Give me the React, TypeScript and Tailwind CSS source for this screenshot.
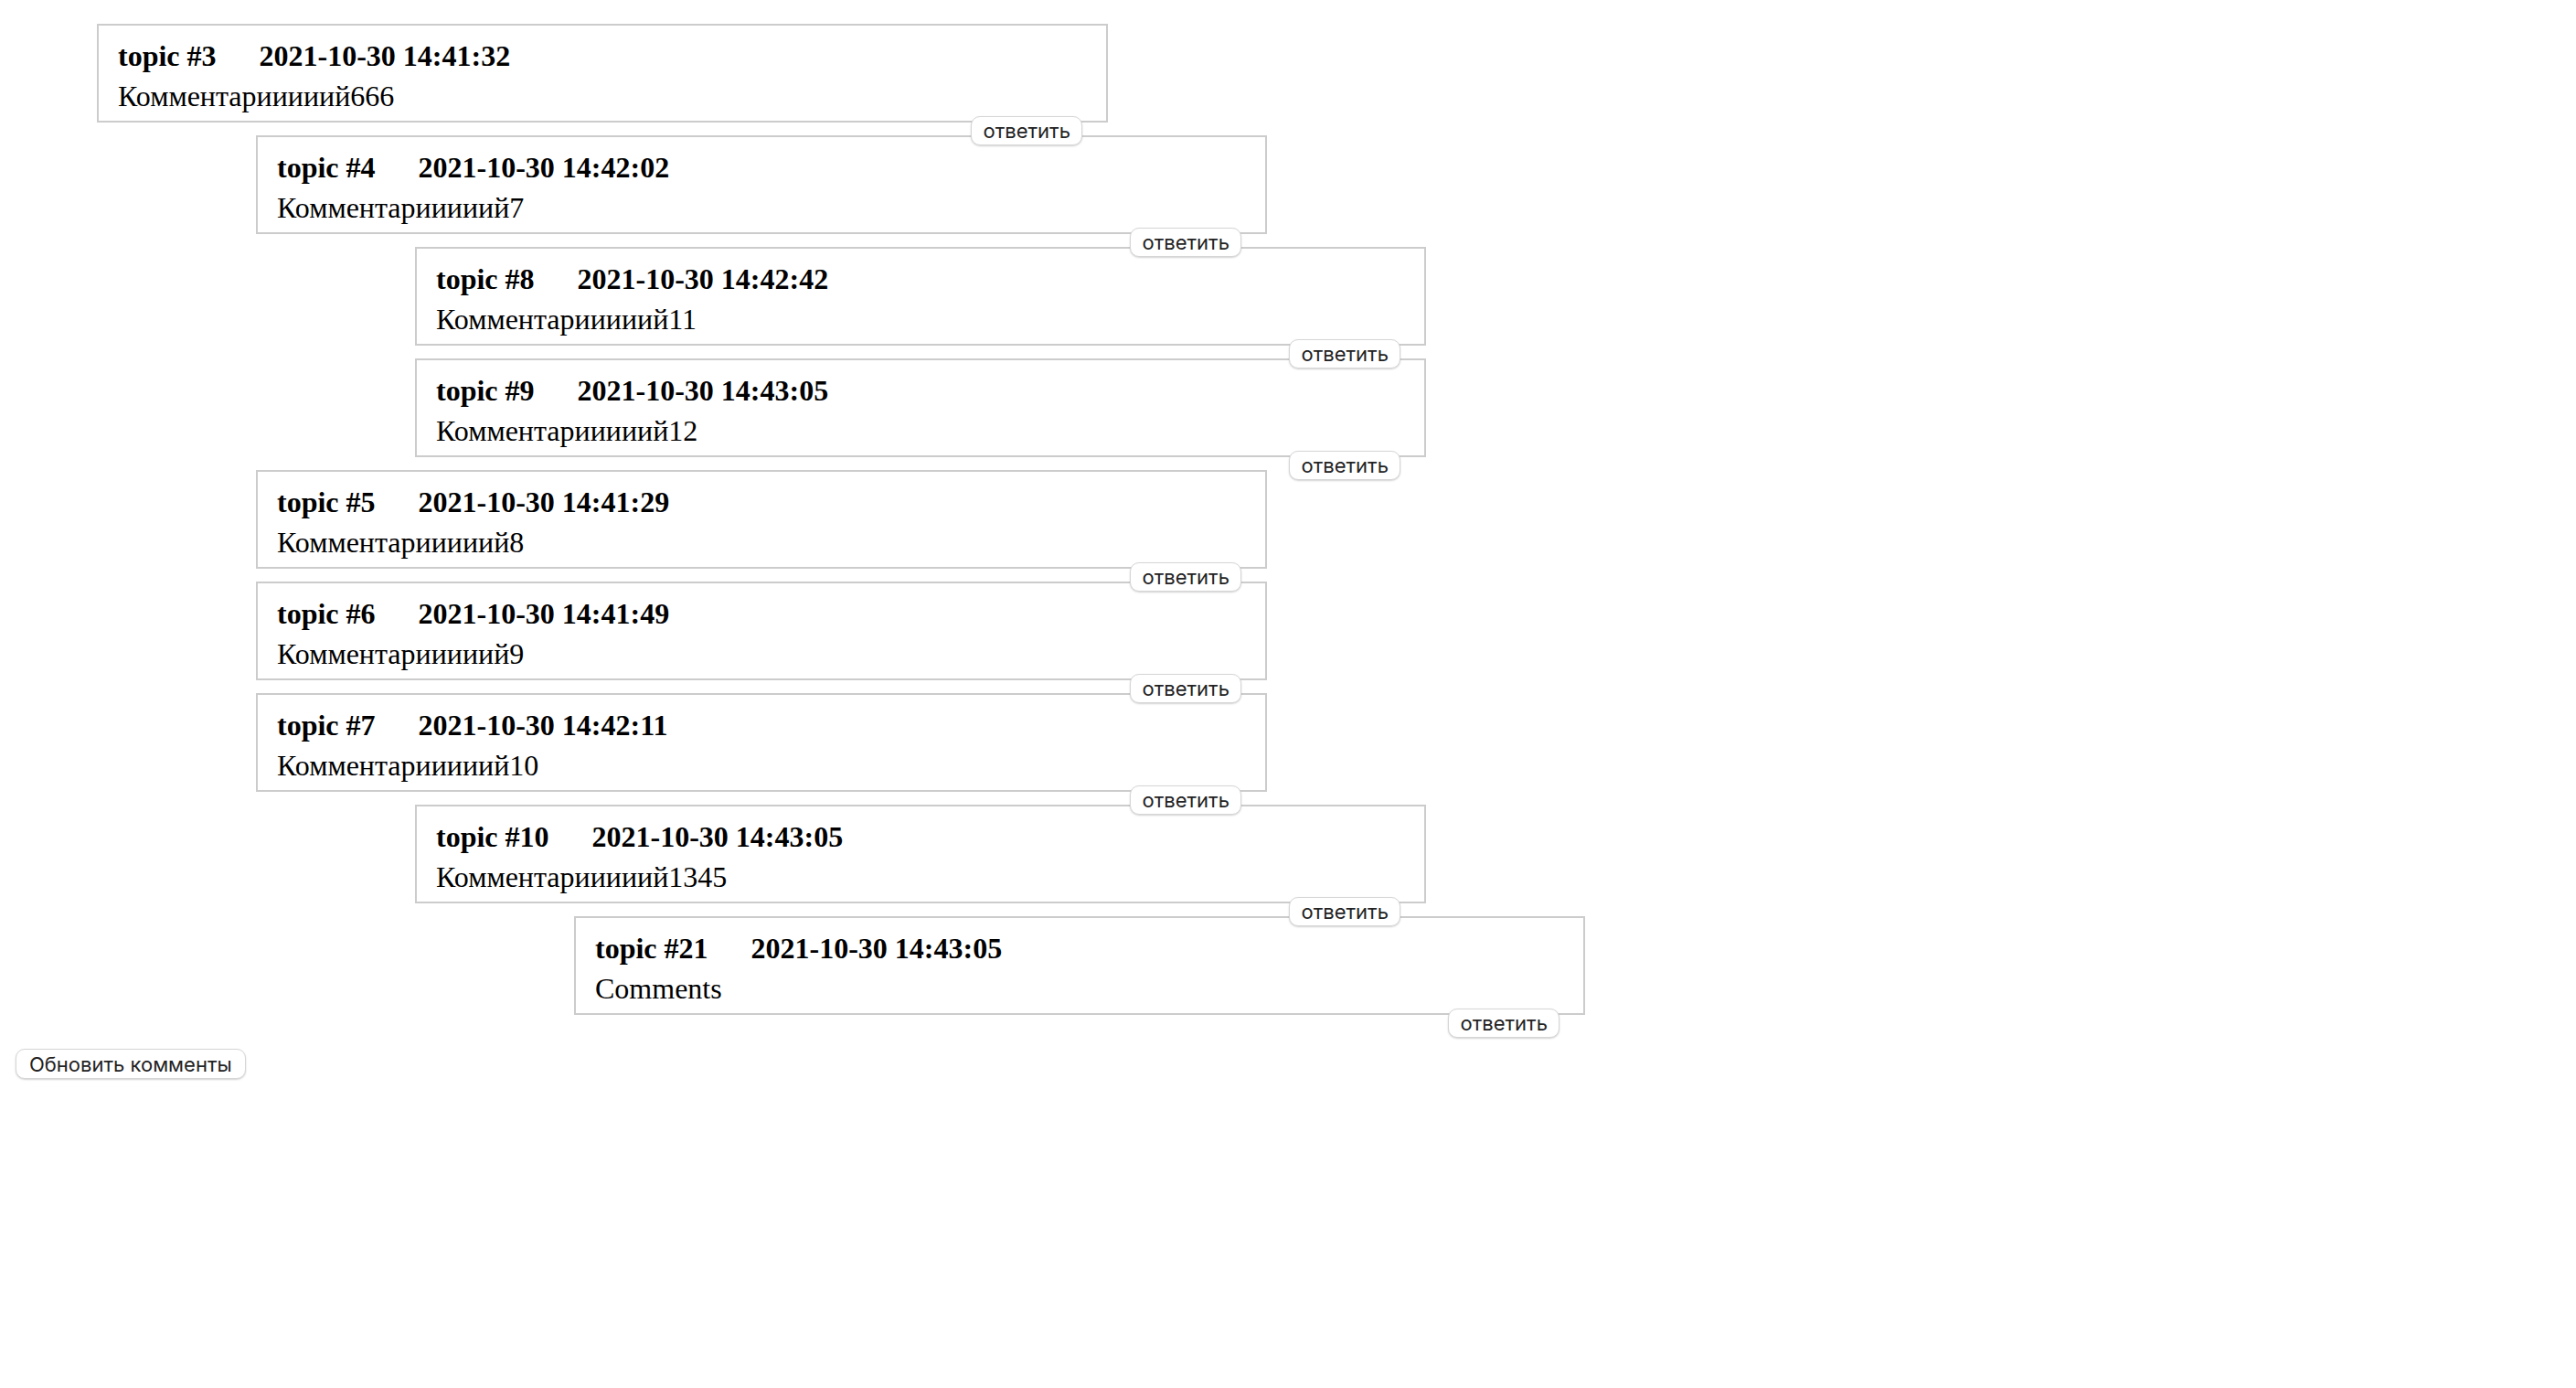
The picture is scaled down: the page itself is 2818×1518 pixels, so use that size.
import { useState } from "react";

type Topic = {
  id: number;
  date: string;
  text: string;
  children?: Topic[];
};

const topics: Topic[] = [
  {
    id: 3,
    date: "2021-10-30 14:41:32",
    text: "Комментарииииий666",
    children: [
      {
        id: 4,
        date: "2021-10-30 14:42:02",
        text: "Комментарииииий7",
        children: [
          { id: 8, date: "2021-10-30 14:42:42", text: "Комментарииииий11" },
          { id: 9, date: "2021-10-30 14:43:05", text: "Комментарииииий12" },
        ],
      },
      { id: 5, date: "2021-10-30 14:41:29", text: "Комментарииииий8" },
      { id: 6, date: "2021-10-30 14:41:49", text: "Комментарииииий9" },
      {
        id: 7,
        date: "2021-10-30 14:42:11",
        text: "Комментарииииий10",
        children: [
          {
            id: 10,
            date: "2021-10-30 14:43:05",
            text: "Комментарииииий1345",
            children: [{ id: 21, date: "2021-10-30 14:43:05", text: "Comments" }],
          },
        ],
      },
    ],
  },
];

// one comment box, its children go indented below it
function Comment({ topic }: { topic: Topic }) {
  return (
    <div>
      <div className="relative w-[1106px] h-[108px] mb-[14px] border-2 border-[#cccccc] pl-[21px] pt-[12px] font-['Liberation_Serif',serif] text-[32px] leading-[42px] text-black">
        <div className="flex gap-[47px] font-bold">
          <span>topic #{topic.id}</span>
          <span>{topic.date}</span>
        </div>
        <div className="mt-[2px]">{topic.text}</div>
        <button className="absolute z-10 right-[26px] -bottom-[27px] h-[32px] px-[12px] bg-white border border-[#d6d6d6] rounded-[10px] shadow-[0_1px_2px_rgba(0,0,0,0.18)] font-['Inter',sans-serif] text-[22px] leading-[30px] text-[#222222]">
          ответить
        </button>
      </div>
      {topic.children && (
        <div className="ml-[174px]">
          {topic.children.map((child) => (
            <Comment key={child.id} topic={child} />
          ))}
        </div>
      )}
    </div>
  );
}

export default function App() {
  const [list] = useState<Topic[]>(topics);

  return (
    <div className="min-h-screen bg-white pt-[26px] pl-[17px]">
      <div className="ml-[89px]">
        {list.map((t) => (
          <Comment key={t.id} topic={t} />
        ))}
      </div>
      <button className="mt-[23px] h-[33px] px-[14px] bg-white border border-[#d6d6d6] rounded-[10px] shadow-[0_1px_2px_rgba(0,0,0,0.18)] font-['Inter',sans-serif] text-[22px] leading-[30px] text-[#222222]">
        Обновить комменты
      </button>
    </div>
  );
}
